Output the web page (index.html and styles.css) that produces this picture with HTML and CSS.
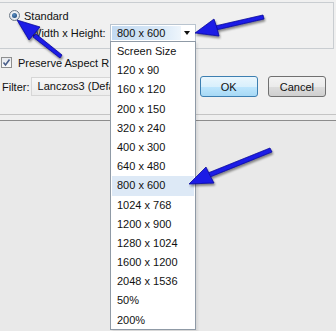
FILE: index.html
```html
<!DOCTYPE html>
<html>
<head>
<meta charset="utf-8">
<link rel="stylesheet" href="styles.css">
</head>
<body>
<div class="top">
  <div class="panel">
    <div class="row1">
      <span class="radio"><span class="dot"></span></span>
      <span class="lbl">Standard</span>
    </div>
    <div class="row2">
      <span class="wh">Width x Height:</span>
      <div class="combo">
        <span class="sel">800 x 600</span>
        <span class="caret"></span>
      </div>
    </div>
  </div>
  <div class="opts">
    <div class="chkrow">
      <span class="chk"><svg width="9" height="9" viewBox="0 0 9 9"><path d="M1.5 4.5 L3.5 7 L7.5 1.5" fill="none" stroke="#4a5f8a" stroke-width="1.6"/></svg></span>
      <span class="clip">Preserve Aspect R</span>
    </div>
    <div class="filterrow">
      <span class="flbl">Filter:</span>
      <div class="fcombo">Lanczos3 (Defa</div>
      <button class="btn ok">OK</button>
      <button class="btn">Cancel</button>
    </div>
  </div>
</div>
<div class="sep"></div>
<div class="rest"></div>

<ul class="list">
  <li>Screen Size</li>
  <li>120 x 90</li>
  <li>160 x 120</li>
  <li>200 x 150</li>
  <li>320 x 240</li>
  <li>400 x 300</li>
  <li>640 x 480</li>
  <li class="hi">800 x 600</li>
  <li>1024 x 768</li>
  <li>1200 x 900</li>
  <li>1280 x 1024</li>
  <li>1600 x 1200</li>
  <li>2048 x 1536</li>
  <li>50%</li>
  <li>200%</li>
</ul>

<svg class="arrows" width="336" height="331" viewBox="0 0 336 331">
  <defs>
    <filter id="sh" x="-20%" y="-20%" width="140%" height="140%">
      <feGaussianBlur in="SourceAlpha" stdDeviation="1.2"/>
      <feOffset dx="1" dy="1.5" result="b"/>
      <feComponentTransfer><feFuncA type="linear" slope="0.45"/></feComponentTransfer>
      <feMerge><feMergeNode/><feMergeNode in="SourceGraphic"/></feMerge>
    </filter>
  </defs>
  <g filter="url(#sh)" fill="#1a1ae6" stroke="#0a0a9a" stroke-width="0.8" stroke-linejoin="round">
    <path d="M62 55 L60 58 L33 37 L36 34 Z"/>
    <path d="M17 20 L40 27 L34.5 33.5 L29 40 Z"/>
    <path d="M263 15 L264 19 L216 30 L215 26 Z"/>
    <path d="M195 33 L214 19 L217 28 L219 36 Z"/>
    <path d="M270 148 L272 152 L210 177 L208 173 Z"/>
    <path d="M189 184 L206 167 L210 175.5 L214 183 Z"/>
  </g>
</svg>
</body>
</html>
```
FILE: styles.css
```css
html, body {
  margin: 0;
  padding: 0;
}
body {
  width: 336px;
  height: 331px;
  overflow: hidden;
  position: relative;
  background: #ebebeb;
  font-family: "Liberation Sans", Arial, sans-serif;
  font-size: 11px;
  color: #111;
  display: flex;
  flex-direction: column;
}
.top {
  background: #f0f0f0;
  padding-top: 2px;
  box-sizing: border-box;
  height: 114px;
}
.panel {
  margin: 0 2px 0 -1px;
  height: 47px;
  box-sizing: border-box;
  border: 1px solid #c9cdd1;
  padding: 6px 0 0 9px;
}
.row1 {
  display: flex;
  align-items: center;
  height: 13px;
}
.radio {
  width: 11px;
  height: 11px;
  box-sizing: border-box;
  border-radius: 50%;
  border: 1px solid #6f7b88;
  background: radial-gradient(circle at 50% 40%, #ffffff, #d6dde5);
  display: flex;
  align-items: center;
  justify-content: center;
  margin-right: 4px;
}
.dot {
  width: 5px;
  height: 5px;
  border-radius: 50%;
  background: radial-gradient(circle at 40% 35%, #5c8fc2, #123d6e);
}
.row2 {
  display: flex;
  align-items: center;
  margin-top: 2px;
  padding-left: 22px;
}
.wh {
  width: 79px;
}
.combo {
  width: 86px;
  height: 17px;
  box-sizing: border-box;
  background: #fff;
  border: 1px solid #b9c4cf;
  border-bottom: none;
  display: flex;
  align-items: center;
  padding: 1px;
}
.sel {
  flex: 1;
  height: 100%;
  line-height: 15px;
  padding-left: 5px;
  background: linear-gradient(to right, #c3daf1, #d8e8f7 70%, #eef5fc);
}
.caret {
  width: 0;
  height: 0;
  border-left: 3.5px solid transparent;
  border-right: 3.5px solid transparent;
  border-top: 4px solid #111;
  margin: 0 4px 0 3px;
}
.opts {
  padding-left: 1px;
}
.chkrow {
  display: flex;
  align-items: center;
  margin-top: 7px;
  height: 13px;
}
.clip {
  width: 96px;
  white-space: nowrap;
}
.chk {
  width: 11px;
  height: 11px;
  box-sizing: border-box;
  border: 1px solid #8e8f8f;
  background: linear-gradient(#e6e9ee, #fbfbfb);
  display: flex;
  align-items: center;
  justify-content: center;
  margin-right: 6px;
}
.filterrow {
  display: flex;
  align-items: center;
  margin-top: 7px;
  height: 21px;
}
.flbl {
  width: 29px;
  padding-left: 1px;
}
.fcombo {
  width: 86px;
  height: 19px;
  box-sizing: border-box;
  line-height: 17px;
  padding-left: 6px;
  border: 1px solid #d6d6d6;
  border-right: none;
  background: linear-gradient(#f7f7f7, #ececec);
  margin-right: 84px;
  white-space: nowrap;
}
.btn {
  width: 59px;
  height: 21px;
  box-sizing: border-box;
  border: 1px solid #707070;
  border-radius: 3px;
  background: linear-gradient(#f3f3f3 0%, #ebebeb 50%, #dddddd 51%, #cfcfcf 100%);
  font-family: "Liberation Sans", Arial, sans-serif;
  font-size: 11px;
  color: #111;
  padding: 0;
  margin-right: 10px;
}
.btn.ok {
  border-color: #3c7fb1;
  background: linear-gradient(#eaf6fd 0%, #d9f0fc 50%, #bee6fd 51%, #a7d9f5 100%);
}
.sep {
  height: 7px;
  box-sizing: border-box;
  border-top: 1px solid #c4c4c4;
  border-bottom: 1px solid #8c8c8c;
  background: #efefef;
}
.rest {
  flex: 1;
  background: #e9e9e9;
}
.list {
  position: absolute;
  left: 110px;
  top: 41px;
  width: 86px;
  height: 289px;
  box-sizing: border-box;
  margin: 0;
  padding: 0 1px;
  list-style: none;
  background: #fff;
  border: 1px solid #8f9aa6;
  box-shadow: 2px 2px 2px rgba(0, 0, 0, 0.08);
}
.list li {
  height: 19.2px;
  line-height: 19.2px;
  padding-left: 5px;
  white-space: nowrap;
}
.list li.hi {
  background: #dde9f6;
}
.arrows {
  position: absolute;
  left: 0;
  top: 0;
  pointer-events: none;
}
```
